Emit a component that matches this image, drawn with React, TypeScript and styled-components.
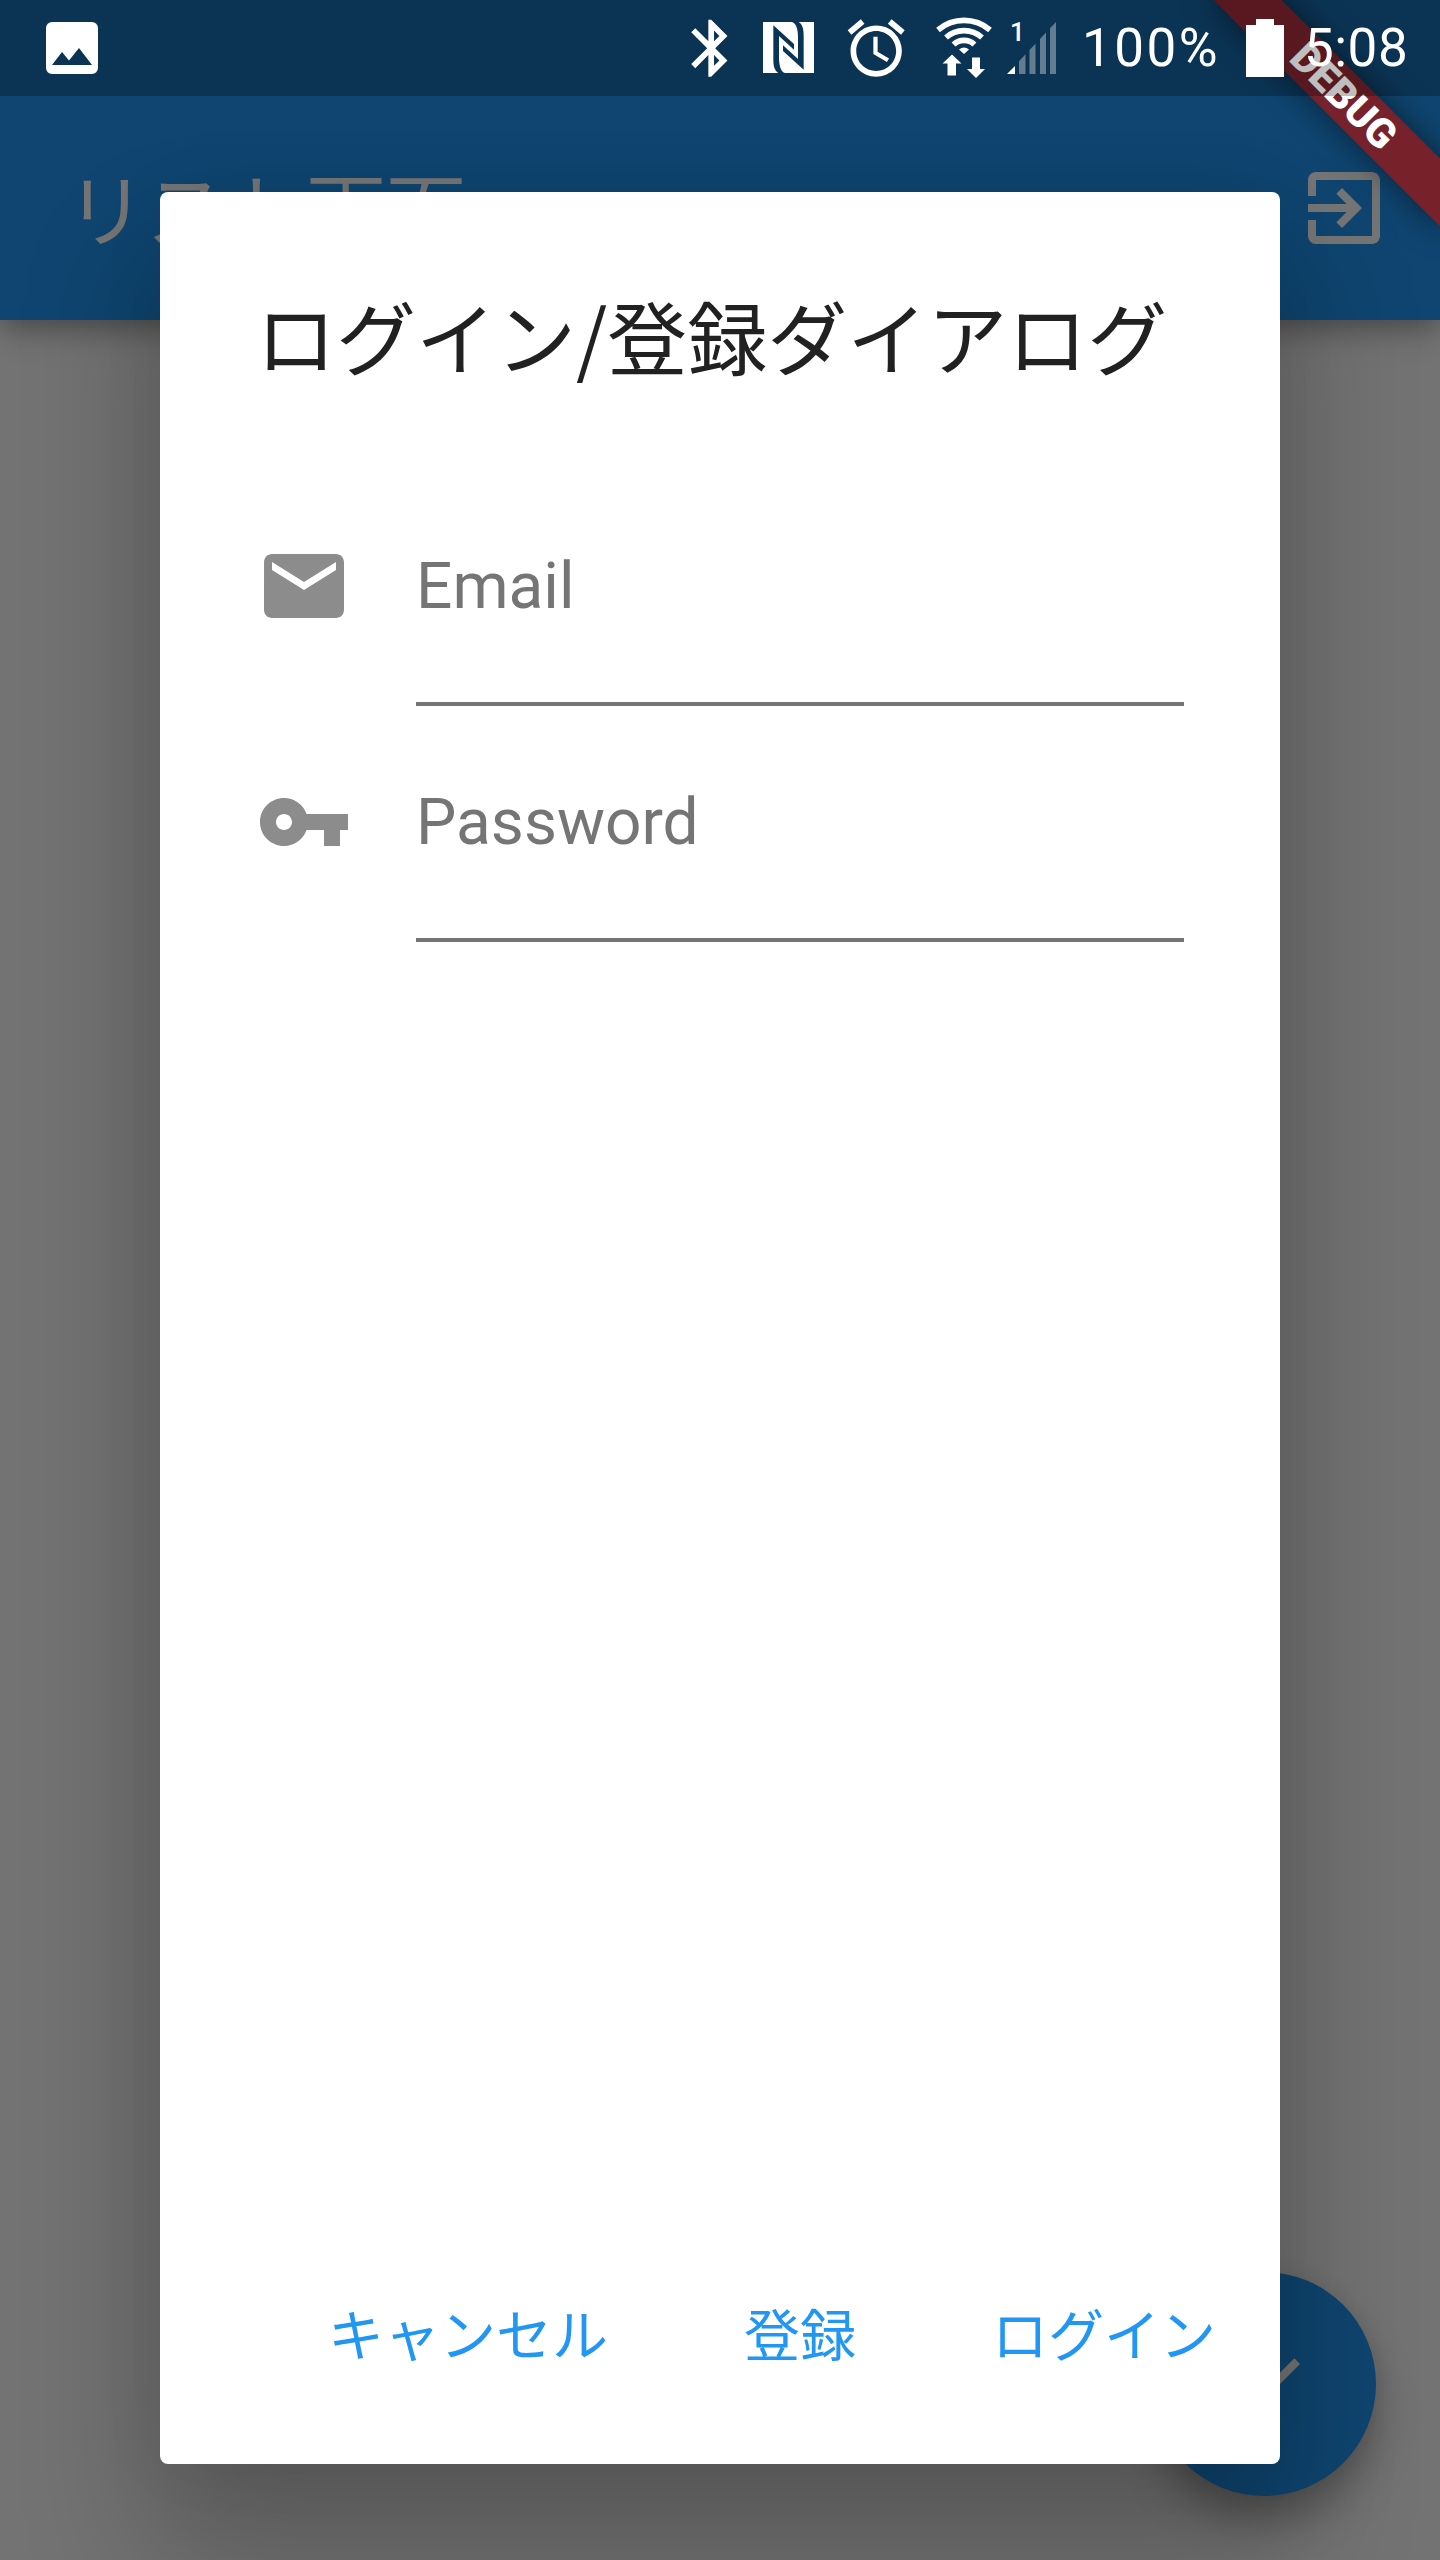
import React from "react";
import styled, { createGlobalStyle } from "styled-components";
import { MdAlarm, MdBluetooth, MdCheck, MdEmail, MdExitToApp, MdVpnKey } from "react-icons/md";

const GlobalStyle = createGlobalStyle`
  * { box-sizing: border-box; }
  body { margin: 0; background: #fafafa; }
`;

const jp = `"Noto Sans CJK JP", sans-serif`;
const latin = `Roboto, "Noto Sans CJK JP", sans-serif`;

const Screen = styled.div`
  display: grid;
  grid-template: 2560px / 1440px;
  width: 1440px;
  height: 2560px;
  overflow: hidden;
`;

const Layer = styled.div`
  grid-area: 1 / 1;
  min-width: 0;
  min-height: 0;
`;

const Scaffold = styled(Layer)`
  display: flex;
  flex-direction: column;
  background: #fafafa;
`;

const AppBar = styled.header`
  display: flex;
  align-items: center;
  justify-content: space-between;
  height: 320px;
  padding: 96px 48px 0 64px;
  background: #2196f3;
  color: #fff;
  box-shadow: 0 8px 22px -4px rgba(0, 0, 0, 0.2), 0 16px 27px rgba(0, 0, 0, 0.14),
    0 4px 50px rgba(0, 0, 0, 0.08);
`;

const PageTitle = styled.h1`
  margin: 0;
  padding: 0 0 6px 2px;
  font: 400 80px/96px ${jp};
`;

const Body = styled.main`
  flex: 1;
  display: flex;
  align-items: flex-end;
  justify-content: flex-end;
  padding: 64px;
`;

const Fab = styled.button`
  display: flex;
  align-items: center;
  justify-content: center;
  width: 224px;
  height: 224px;
  padding: 0;
  border: 0;
  border-radius: 50%;
  background: #2196f3;
  color: #fff;
  box-shadow: 0 28px 40px rgba(0, 0, 0, 0.26), 0 2px 24px rgba(0, 0, 0, 0.1);
`;

const Scrim = styled(Layer)`
  display: flex;
  padding: 192px 160px 96px;
  background: rgba(0, 0, 0, 0.54);
`;

const Dialog = styled.section`
  flex: 1;
  display: flex;
  flex-direction: column;
  padding: 96px 32px 60px 96px;
  border-radius: 8px;
  background: #fff;
  box-shadow: 0 80px 130px 12px rgba(0, 0, 0, 0.24), 0 0 70px rgba(0, 0, 0, 0.05);
`;

const DialogTitle = styled.h2`
  margin: 0;
  height: 182px;
  font: 400 80px/92px ${jp};
  white-space: nowrap;
  color: #212121;
`;

const Form = styled.div`
  flex: 1;
  padding-right: 64px;
`;

const Field = styled.label`
  display: flex;
  gap: 64px;
  height: 236px;
`;

const FieldIcon = styled.span`
  display: flex;
  padding-top: 68px;
  color: #8c8c8c;
`;

const FieldInput = styled.span`
  flex: 1;
  padding-top: 79px;
  border-bottom: 4px solid #757575;
  font: 400 64px/75px ${latin};
  color: #757575;
`;

const Actions = styled.div`
  display: flex;
  justify-content: flex-end;
  gap: 32px;
`;

const TextButton = styled.button`
  min-width: 256px;
  height: 144px;
  padding: 0 32px;
  border: 0;
  background: none;
  font: 400 56px/72px ${jp};
  white-space: nowrap;
  color: #2196f3;
`;

const BannerLayer = styled(Layer)`
  position: relative;
  overflow: hidden;
  pointer-events: none;
`;

const Banner = styled.div`
  position: absolute;
  top: 112px;
  right: -160px;
  width: 320px;
  height: 48px;
  transform-origin: 160px -112px;
  transform: rotate(45deg);
  background: linear-gradient(rgba(183, 28, 28, 0.63), rgba(183, 28, 28, 0.63)), rgba(0, 0, 0, 0.38);
  box-shadow: 0 0 32px rgba(0, 0, 0, 0.5);
  font: 900 40.8px/48px ${latin};
  text-align: center;
  color: #fff;
`;

const StatusBar = styled(Layer)`
  position: relative;
  display: flex;
  align-items: center;
  height: 96px;
  padding: 0 32px 0 46px;
  background: rgba(0, 0, 0, 0.25);
  color: #fff;
`;

const Glyph = styled.svg<{ $gap: number }>`
  flex: none;
  display: block;
  overflow: visible;
  margin-left: ${(p) => p.$gap}px;
`;

const Tray = styled.div`
  display: flex;
  align-items: center;
  margin-left: auto;
`;

const StatusText = styled.span<{ $width: number; $gap: number; $spacing: number }>`
  width: ${(p) => p.$width}px;
  margin-left: ${(p) => p.$gap}px;
  font: 400 53px/62px ${latin};
  letter-spacing: ${(p) => p.$spacing}px;
  white-space: nowrap;
`;

const bars = [
  [12, 18.5],
  [22.5, 28.5],
  [33, 39],
  [43, 49],
];
const slope = (x: number) => 52 - (x * 52) / 49;

export default function App() {
  return (
    <Screen>
      <GlobalStyle />
      <Scaffold>
        <AppBar>
          <PageTitle>リスト画面</PageTitle>
          <MdExitToApp size={96} />
        </AppBar>
        <Body>
          <Fab aria-label="OK">
            <MdCheck size={96} />
          </Fab>
        </Body>
      </Scaffold>

      <Scrim>
        <Dialog>
          <DialogTitle>ログイン/登録ダイアログ</DialogTitle>
          <Form>
            <Field>
              <FieldIcon><MdEmail size={96} /></FieldIcon>
              <FieldInput>Email</FieldInput>
            </Field>
            <Field>
              <FieldIcon><MdVpnKey size={96} /></FieldIcon>
              <FieldInput>Password</FieldInput>
            </Field>
          </Form>
          <Actions>
            <TextButton>キャンセル</TextButton>
            <TextButton>登録</TextButton>
            <TextButton>ログイン</TextButton>
          </Actions>
        </Dialog>
      </Scrim>

      <BannerLayer>
        <Banner>DEBUG</Banner>
      </BannerLayer>

      <StatusBar>
        <Glyph $gap={0} width="52" height="52" viewBox="0 0 52 52">
          <path
            fill="currentColor"
            fillRule="evenodd"
            d="M6 0H46A6 6 0 0 1 52 6V46A6 6 0 0 1 46 52H6A6 6 0 0 1 0 46V6A6 6 0 0 1 6 0ZM6 43H46L33 26L23 38.500L16 30Z"
          />
        </Glyph>
        <Tray>
          <MdBluetooth size={68.4} />
          <Glyph $gap={17} width="51" height="51" viewBox="0 0 153 153">
            <path
              fill="currentColor"
              fillRule="evenodd"
              d="M0 0H153V153H0Z
                 M31 10L93 66V83L48 42V104C48 134 54 149 66 153H46C35 146 31 134 31 112Z
                 M122 143L60 87V70L105 111V49C105 19 99 4 87 0H107C118 7 122 19 122 41Z"
            />
          </Glyph>
          <Glyph as={MdAlarm} $gap={28} size={68.4} />
          <Glyph $gap={26} width="56" height="60" viewBox="936 17.500 56 60">
            <g fill="none" stroke="currentColor" strokeWidth="5.600">
              <path d="M938 29.500A40 40 0 0 1 990 29.500" />
              <path d="M946 37A27 27 0 0 1 982 37" />
              <path d="M953.500 44A15.500 15.500 0 0 1 974.500 44" />
            </g>
            <path fill="currentColor" d="M959 49Q964 45 969 49L964 53.500Z" />
            <path fill="currentColor" d="M952 54L961.500 63H956V75H947.500V63H942.500Z" />
            <path fill="currentColor" d="M976 77.500L985 68.500H980V57H972V68.500H967Z" />
          </Glyph>
          <Glyph $gap={15} width="49" height="52" viewBox="0 0 49 52">
            <text x="3" y="19" fill="currentColor" fontFamily="Roboto, sans-serif" fontWeight="500" fontSize="26">1</text>
            <path fill="currentColor" d="M0 52L8 44V52Z" />
            {bars.map(([a, b]) => (
              <path key={a} fill="currentColor" opacity="0.36" d={`M${a} 52V${slope(a)}L${b} ${slope(b)}V52Z`} />
            ))}
          </Glyph>
          <StatusText $width={140} $gap={26} $spacing={2.5}>100%</StatusText>
          <Glyph $gap={24} width="38" height="58" viewBox="0 0 38 58">
            <path fill="currentColor" d="M10 0H28V6H38V58H0V6H10Z" />
          </Glyph>
          <StatusText $width={104} $gap={20} $spacing={0.5}>5:08</StatusText>
        </Tray>
      </StatusBar>
    </Screen>
  );
}
